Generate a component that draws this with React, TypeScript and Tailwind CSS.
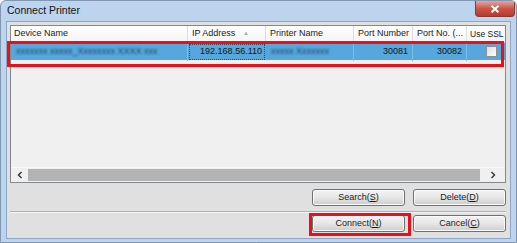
import React from "react";

const U = ({ c }: { c: string }) => <span className="underline underline-offset-[1px]">{c}</span>;

function Btn({ label, k }: { label: string; k: string }) {
  return (
    <div className="w-[93px] h-[17px] flex items-center justify-center rounded-[3px] border border-[#707070] bg-gradient-to-b from-[#f3f3f3] via-[#e6e6e6] to-[#cdcdcd] text-[9px] text-[#1a1a1a] shadow-[inset_0_0_0_1px_#fbfbfb]">
      <span>
        {label}(<U c={k} />)
      </span>
    </div>
  );
}

export default function App() {
  const cols = "grid grid-cols-[177px_78px_88px_59px_54px_38px]";
  return (
    <div className="relative w-[517px] h-[243px] bg-[#bcd4ee] rounded-t-[6px] border border-[#8196b0] flex flex-col font-['Liberation_Sans',Arial,sans-serif] overflow-hidden">
      <div className="h-[20px] flex items-center pl-[6px] text-[10.5px] text-[#111]">Connect Printer</div>
      <div className="absolute top-0 right-[1px] w-[40px] h-[16px] rounded-b-[4px] border border-t-0 border-[#8a3a33] bg-gradient-to-b from-[#e4a69d] via-[#c9564a] to-[#b8392d] flex items-center justify-center">
        <svg width="10" height="8" viewBox="0 0 10 8">
          <path d="M1.5 0.8 L8.5 7.2 M8.5 0.8 L1.5 7.2" stroke="#ffffff" strokeWidth="2" />
        </svg>
      </div>
      <div className="mx-[5px] mb-[3px] flex-1 bg-[#e0e0e0] border border-[#8ea6c3] flex flex-col pt-[3px] pl-[3px] pr-[4px]">
        <div className="h-[158px] border border-[#828790] bg-[#f0f0f0] flex flex-col">
          <div className={`${cols} h-[17px] bg-gradient-to-b from-[#ffffff] to-[#f4f4f4] border-b border-[#d5d5d5] text-[9px] text-[#1a1a1a]`}>
            <div className="border-r border-[#dedede] flex items-center pl-[3px]">Device Name</div>
            <div className="relative border-r border-[#dedede] flex items-center pl-[4px]">
              IP Address
              <span className="absolute left-[55px] top-[3px] text-[6px] text-[#a8a8a8]">▲</span>
            </div>
            <div className="border-r border-[#dedede] flex items-center pl-[4px]">Printer Name</div>
            <div className="border-r border-[#dedede] flex items-center pl-[4px]">Port Number</div>
            <div className="border-r border-[#dedede] flex items-center pl-[4px]">Port No. (...</div>
            <div className="flex items-center pl-[3px] whitespace-nowrap text-[8.5px]">Use SSL</div>
          </div>
          <div className={`${cols} h-[17px] bg-[#56a7db] text-[9px] text-[#151515]`}>
            <div className="border-r border-[#7dbde4] flex items-center pl-[5px] overflow-hidden">
              <span className="blur-[1px] text-[#223f5e] whitespace-nowrap">xxxxxxx xxxxx_Xxxxxxxx XXXX xxx</span>
            </div>
            <div className="p-[1px]">
              <div className="h-full border border-dotted border-[#2e4a63] flex items-center justify-end pr-[2px]">192.168.56.110</div>
            </div>
            <div className="border-r border-[#7dbde4] flex items-center pl-[5px] overflow-hidden">
              <span className="blur-[1px] text-[#223f5e] whitespace-nowrap">xxxxx Xxxxxxx</span>
            </div>
            <div className="border-r border-[#7dbde4] flex items-center justify-end pr-[4px]">30081</div>
            <div className="border-r border-[#7dbde4] flex items-center justify-end pr-[4px]">30082</div>
            <div className="flex items-center justify-end pr-[8px]">
              <div className="w-[11px] h-[11px] border border-[#8e8f8f] bg-gradient-to-br from-[#e0e0e0] to-[#fbfbfb]" />
            </div>
          </div>
          <div className="flex-1" />
          <div className="h-[15px] flex border-t border-[#fafafa]">
            <div className="w-[17px] flex items-center justify-center bg-[#f0f0f0]">
              <svg width="6" height="8" viewBox="0 0 6 8"><path d="M4.5 1 L1.5 4 L4.5 7" stroke="#333" strokeWidth="1.4" fill="none" /></svg>
            </div>
            <div className="flex-1 bg-[#b3b3b3] my-[1px]" />
            <div className="w-[25px] flex items-center justify-center bg-[#f0f0f0]">
              <svg width="6" height="8" viewBox="0 0 6 8"><path d="M1.5 1 L4.5 4 L1.5 7" stroke="#333" strokeWidth="1.4" fill="none" /></svg>
            </div>
          </div>
        </div>
        <div className="mt-[6px] flex justify-end gap-[8px]">
          <Btn label="Search" k="S" />
          <Btn label="Delete" k="D" />
        </div>
        <div className="mt-[5px] h-[2px] border-t border-[#b0b0b0] border-b border-b-[#f4f4f4]" />
        <div className="mt-[2px] flex justify-end gap-[8px]">
          <Btn label="Connect" k="N" />
          <Btn label="Cancel" k="C" />
        </div>
      </div>
      <div className="absolute left-[6px] top-[40px] w-[497px] h-[26px] border-[3px] border-[#e8101a]" />
      <div className="absolute left-[308px] top-[212px] w-[102px] h-[23px] border-[3px] border-[#e8101a]" />
    </div>
  );
}
